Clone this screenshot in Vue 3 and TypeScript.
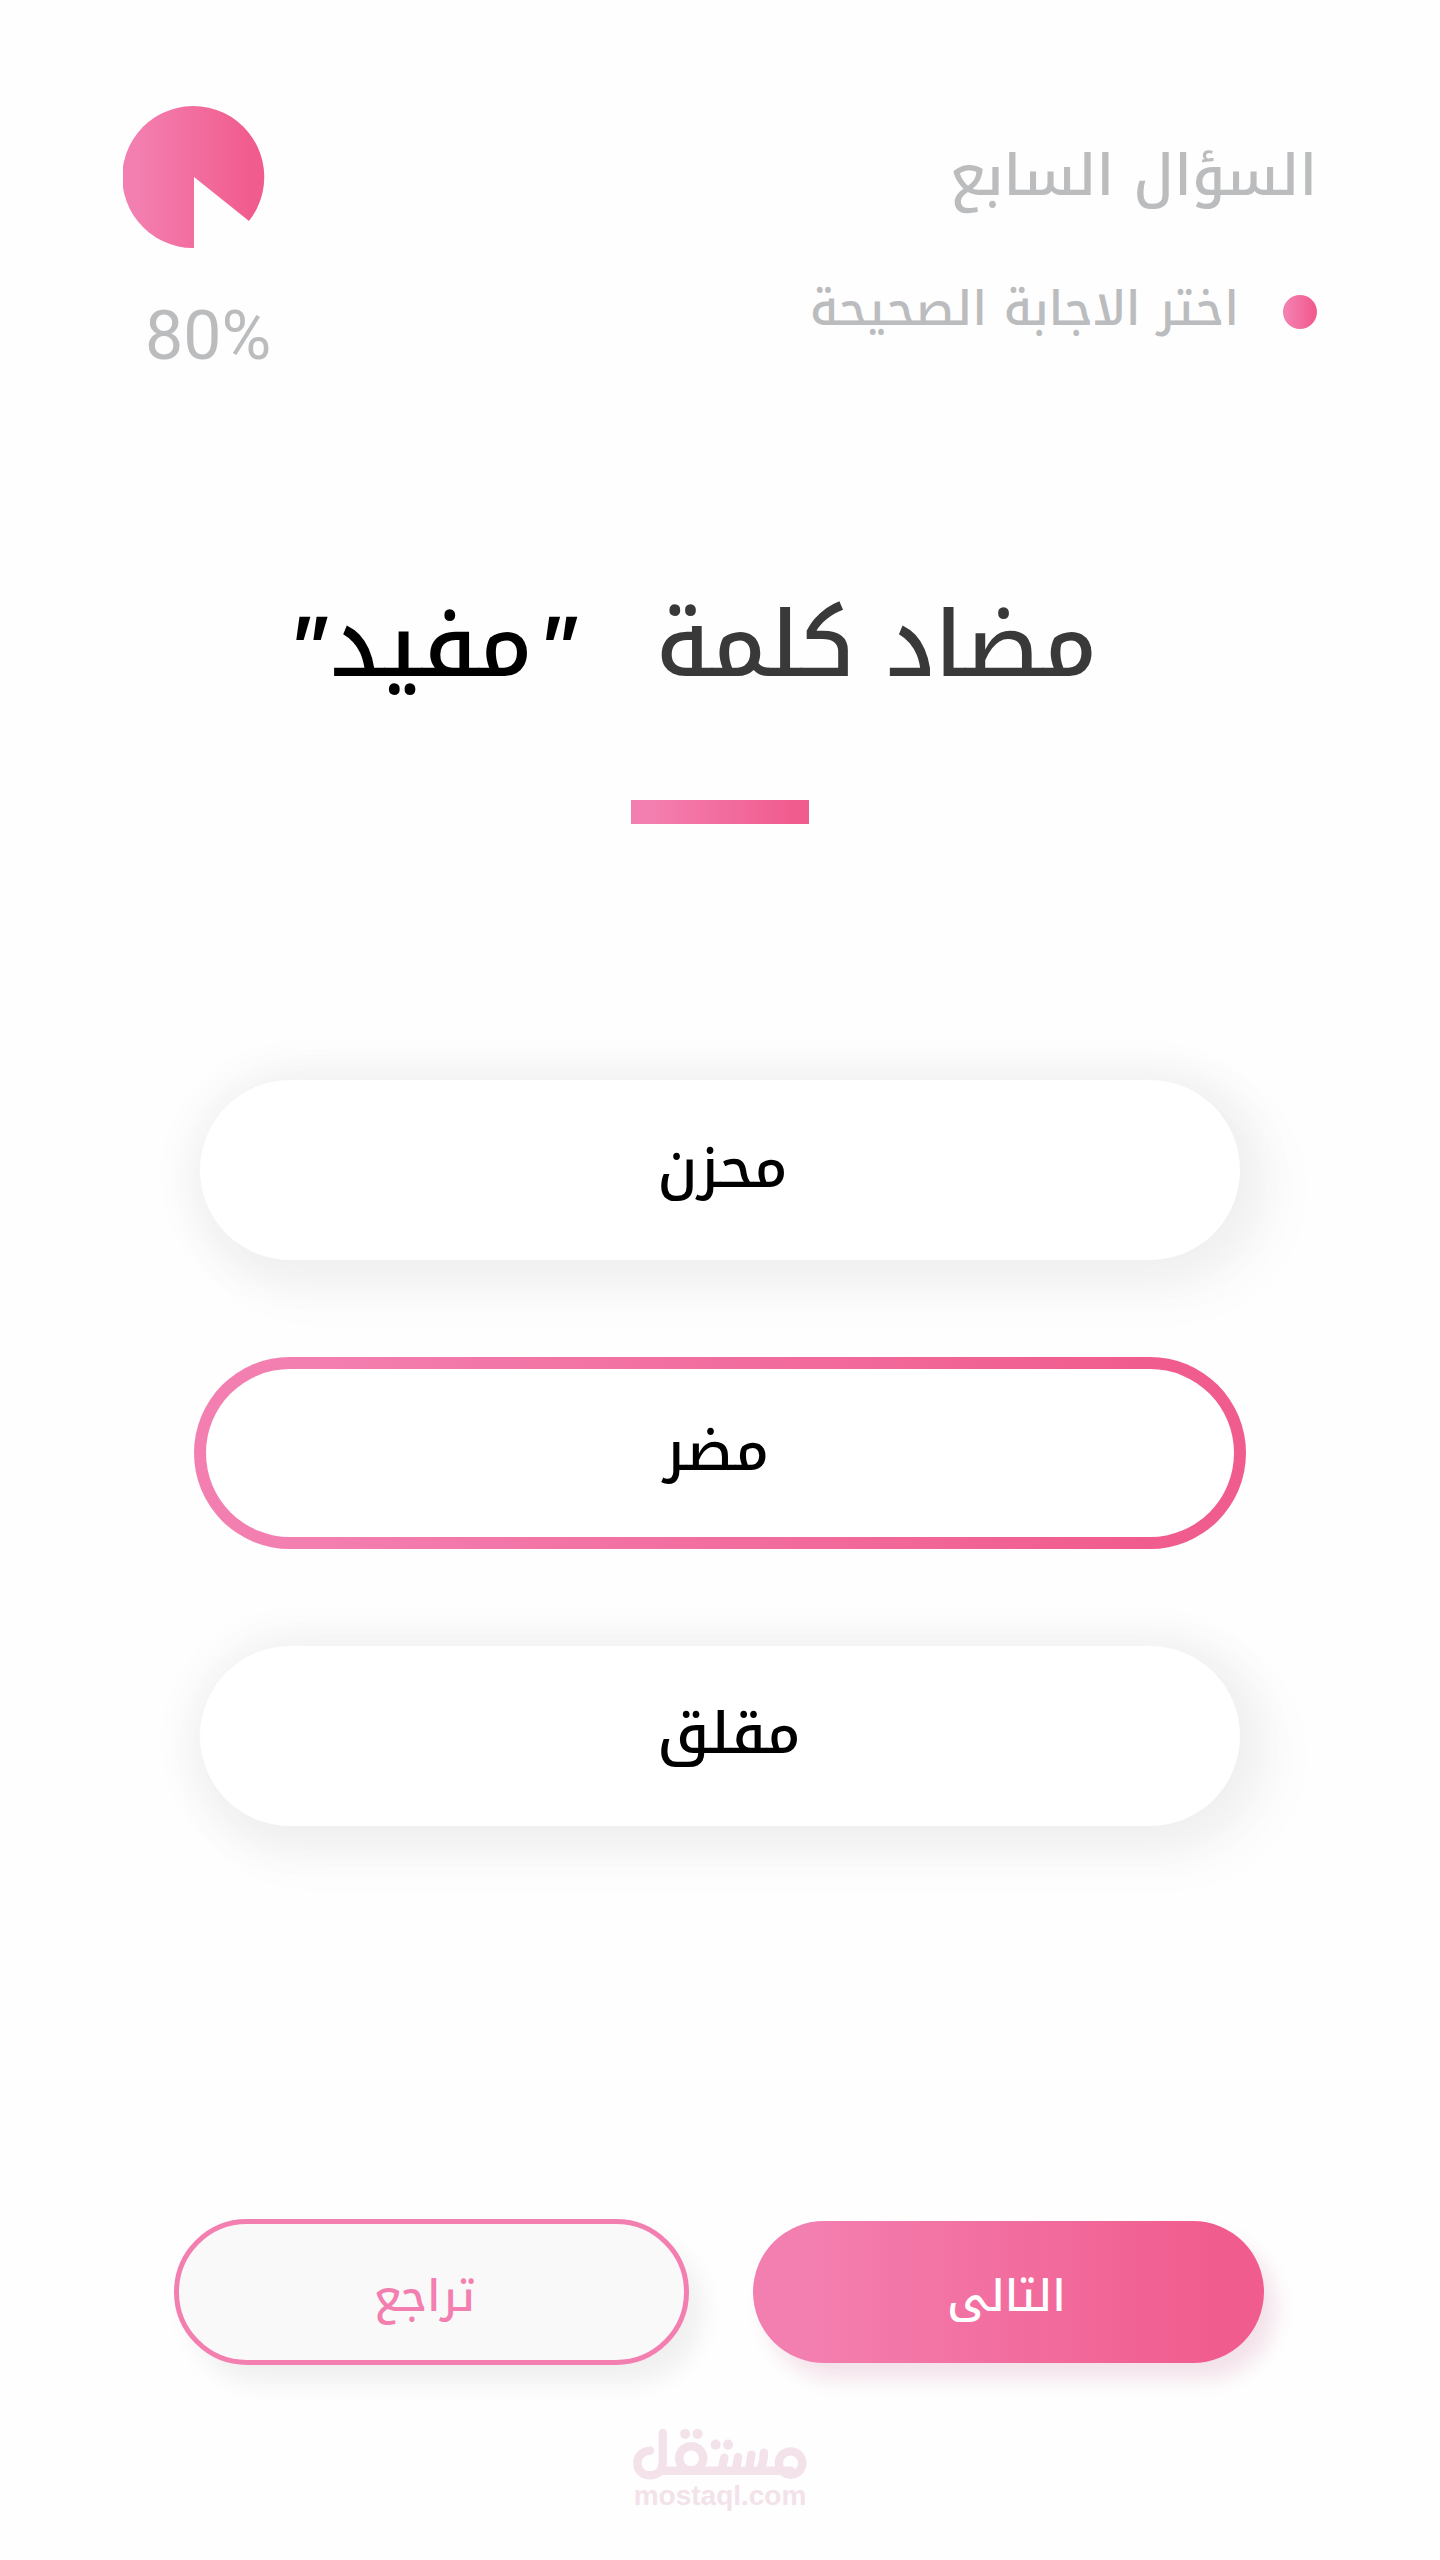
<script setup lang="ts">
import { ref } from 'vue'

interface Answer {
  id: string
  label: string
}

const answers: Answer[] = [
  { id: 'sad', label: 'محزن' },
  { id: 'harmful', label: 'مضر' },
  { id: 'worrying', label: 'مقلق' },
]

const selected = ref<string>('harmful')
</script>

<template>
  <main class="page" dir="rtl" lang="ar">
    <header class="top">
      <div class="intro">
        <h2 class="number">السؤال السابع</h2>
        <p class="hint"><span class="dot"></span><span class="hint-text">اختر الاجابة الصحيحة</span></p>
      </div>
      <div class="progress">
        <svg class="pie" viewBox="0 0 142 142" aria-hidden="true">
          <defs>
            <linearGradient id="pie-fill" x1="0" x2="1" y1="0" y2="0">
              <stop offset="0.1" stop-color="#f37fb0" />
              <stop offset="0.9" stop-color="#f15c8e" />
            </linearGradient>
          </defs>
          <path d="M71 71V142A71 71 0 1 1 126 115Z" fill="url(#pie-fill)" />
        </svg>
        <span class="percent" dir="ltr">80%</span>
      </div>
    </header>

    <h1 class="question">
      <span>مضاد كلمة</span>
      <span class="word"><i class="quote">"</i>مفيد<i class="quote">"</i></span>
    </h1>
    <div class="rule"></div>

    <form class="quiz" @submit.prevent>
      <div class="answers" role="radiogroup">
        <label
          v-for="answer in answers"
          :key="answer.id"
          class="answer"
          :class="{ selected: selected === answer.id }"
        >
          <input v-model="selected" type="radio" name="answer" :value="answer.id" />
          <span>{{ answer.label }}</span>
        </label>
      </div>
      <div class="actions">
        <button type="submit" class="action next">التالى</button>
        <button type="button" class="action back">تراجع</button>
      </div>
    </form>

    <footer class="brand">
      <svg class="logo" viewBox="68 56 520 154" aria-hidden="true">
        <g fill="none" stroke="#f3e2ea" stroke-linecap="round" stroke-width="25">
          <path d="M119 123C96 124 81 140 81 160C81 182 97 197 119 197C142 197 157 182 157 158V70" />
          <path d="M150 183H540" />
          <circle cx="242" cy="146" r="36" />
          <circle cx="539" cy="160" r="35" />
          <path d="M341 144L334 176M382 142L376 176M422 135L415 176M459 129Q460 150 450 176" />
        </g>
        <g fill="#f3e2ea">
          <circle cx="224" cy="73" r="15" />
          <circle cx="261" cy="73" r="15" />
          <circle cx="315" cy="105" r="15" />
          <circle cx="352" cy="105" r="15" />
        </g>
      </svg>
      <span class="domain" dir="ltr">mostaql.com</span>
    </footer>
  </main>
</template>

<style>
body {
  background: #fefefe;
}
</style>

<style scoped>
.page {
  --pink: linear-gradient(90deg, #f37fb0 10%, #f15c8e 90%);
  display: flex;
  flex-direction: column;
  font-family: 'Noto Kufi Arabic', 'DejaVu Sans', sans-serif;
  font-weight: 500;
  color: #000;
}

.top {
  display: flex;
  justify-content: space-between;
  padding: 106px 123px 0;
}

.number {
  margin: 0;
  font-size: 57px;
  font-weight: 500;
  line-height: 140px;
  color: #bbbcbe;
}

.hint {
  display: flex;
  align-items: center;
  gap: 44px;
  margin: 0;
  font-size: 48px;
  line-height: 126px;
  color: #bbbcbe;
}

.hint-text {
  padding-bottom: 6px;
}

.dot {
  width: 34px;
  height: 34px;
  border-radius: 50%;
  background: var(--pink);
}

.progress {
  display: flex;
  flex-direction: column;
  width: 150px;
}

.pie {
  align-self: flex-end;
  width: 142px;
  height: 142px;
}

.percent {
  margin-top: 48px;
  padding-left: 22px;
  font-family: Roboto, sans-serif;
  font-size: 68px;
  font-weight: 400;
  line-height: 80px;
  text-align: left;
  color: #bbbcbe;
}

.question {
  display: flex;
  justify-content: center;
  gap: 80px;
  margin: 190px 0 0;
  padding-right: 56px;
  font-size: 91px;
  font-weight: 500;
  line-height: 156px;
  color: #393939;
}

.word {
  display: flex;
  gap: 4px;
  color: #000;
}

.quote {
  font-family: 'Noto Sans', sans-serif;
  font-weight: 600;
}

.rule {
  align-self: center;
  width: 178px;
  height: 24px;
  margin-top: 76px;
  background: var(--pink);
}

.quiz {
  margin-top: 256px;
}

.answers {
  display: flex;
  flex-direction: column;
  gap: 103px;
  padding: 0 200px;
}

.answer {
  box-sizing: border-box;
  min-height: 180px;
  padding-left: 44%;
  border-radius: 96px;
  background: #fff;
  box-shadow:
    4px 5px 40px 18px rgba(0, 0, 0, 0.045),
    22px 20px 50px 26px rgba(0, 0, 0, 0.02);
  font-size: 57px;
  line-height: 176px;
  text-align: left;
  cursor: pointer;
}

.answer input {
  position: absolute;
  opacity: 0;
}

.answer.selected {
  min-height: 192px;
  margin: -6px;
  border: 12px solid transparent;
  background:
    linear-gradient(#fff, #fff) padding-box,
    var(--pink) border-box;
  box-shadow: none;
  line-height: 164px;
}

.actions {
  display: grid;
  grid-template-columns: 1fr 1fr;
  gap: 66px;
  margin-top: 395px;
  padding: 0 176px;
}

.action {
  box-sizing: border-box;
  height: 142px;
  padding: 10px 0 0;
  border-radius: 73px;
  font-family: inherit;
  font-size: 44px;
  font-weight: 500;
  line-height: 120px;
  cursor: pointer;
}

.next {
  padding-right: 4px;
  border: 0;
  background: var(--pink);
  box-shadow: 12px 16px 20px #f3e2ea;
  color: #fff;
}

.back {
  height: 146px;
  margin: -2px;
  padding-right: 14px;
  border: 5px solid #f37fb0;
  background: #f9f9f9;
  box-shadow: 14px 18px 24px rgba(0, 0, 0, 0.06);
  color: #f37fb0;
}

.brand {
  display: flex;
  flex-direction: column;
  align-items: center;
  margin-top: 65px;
}

.logo {
  width: 174px;
  height: 52px;
}

.domain {
  font-family: 'Liberation Sans', Arial, sans-serif;
  font-size: 28px;
  font-weight: 700;
  line-height: 32px;
  color: #f3e2ea;
}
</style>
